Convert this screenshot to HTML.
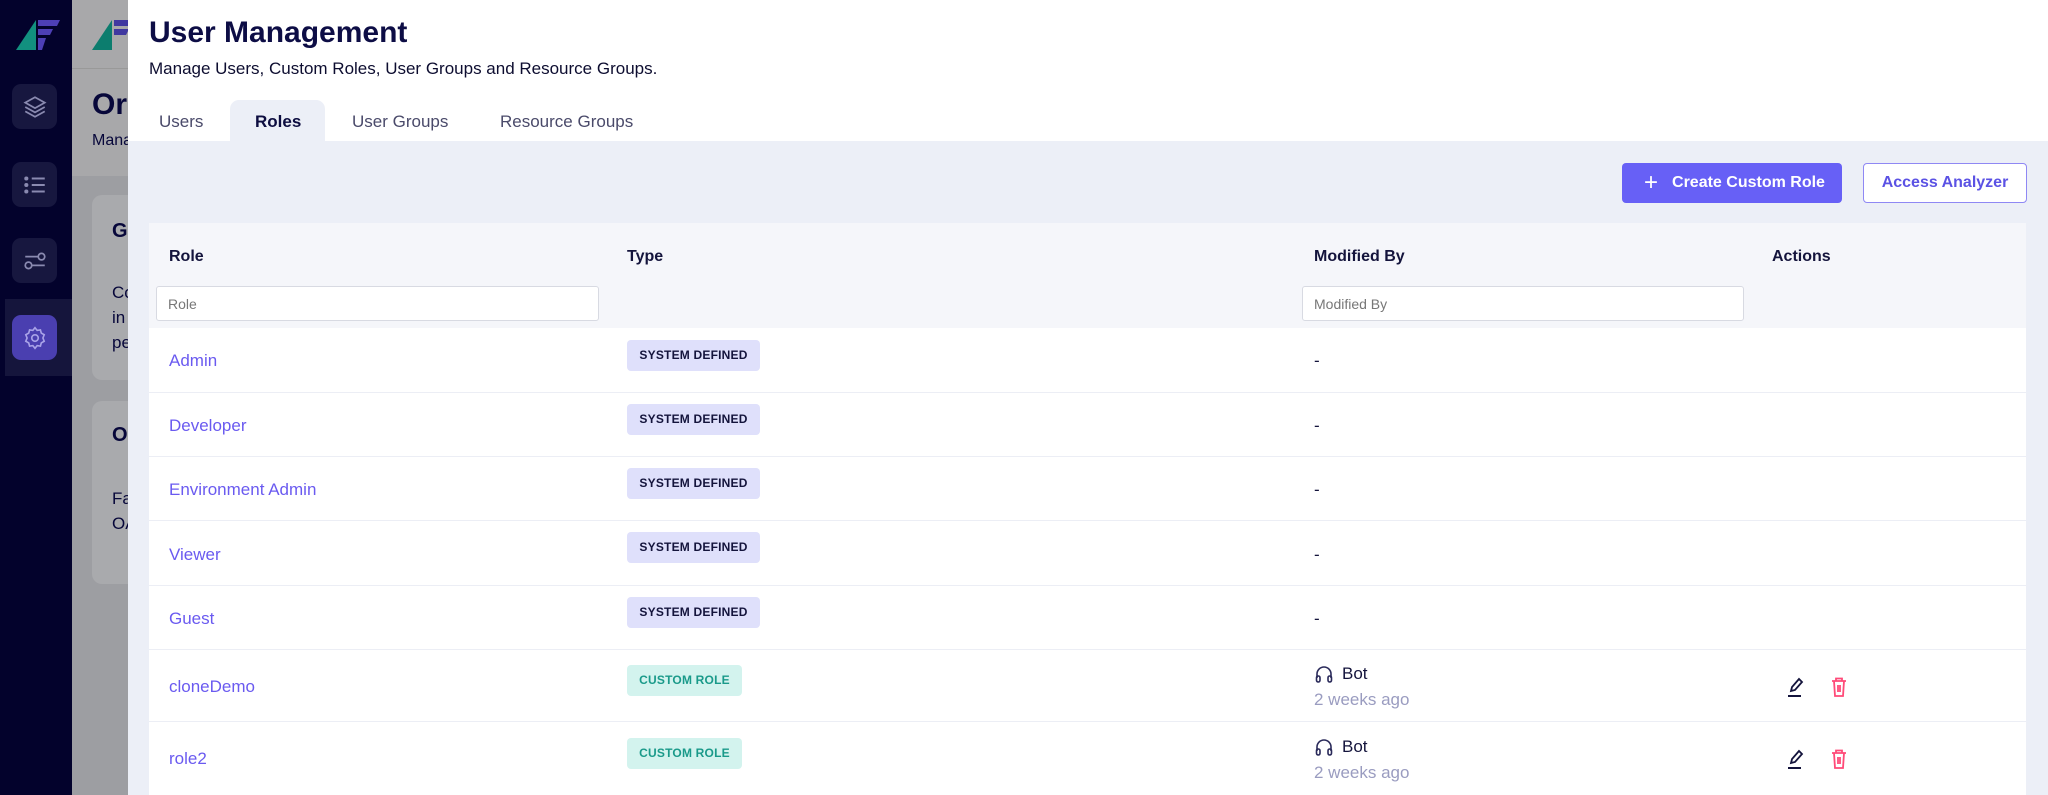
<!DOCTYPE html>
<html><head><meta charset="utf-8">
<style>
*{margin:0;padding:0;box-sizing:border-box}
body{width:2048px;height:795px;overflow:hidden;font-family:"Liberation Sans",sans-serif;background:#fff;position:relative;color:#14143c}
.a{position:absolute}
.sb{left:0;top:0;width:72px;height:795px;background:#03022c}
.ic{left:12px;width:45px;height:45px;border-radius:9px;background:#17173f}
.ov{left:72px;top:0;width:56px;height:795px;background:#9d9ea2;overflow:hidden}
.panel{left:128px;top:0;width:1920px;height:795px;background:#fff}
.gray{left:128px;top:141px;width:1920px;height:654px;background:#eceff7}
.tab{top:100px;height:41px;font-size:17px;color:#4a4a6a;line-height:44px}
.tbl{left:149px;top:223px;width:1877px;height:572px;background:#fff}
.hd{left:149px;top:223px;width:1877px;height:105px;background:#f5f6fa}
.hl{font-size:16px;font-weight:bold;color:#14143c;top:248px}
.inp{top:286px;height:35px;background:#fff;border:1px solid #d8dae2;border-radius:3px;font-size:14px;color:#777;padding:9px 11px}
.row{left:149px;width:1877px;border-bottom:1px solid #eceef5}
.lnk{left:169px;font-size:17px;color:#6a5af0}
.bs{left:627px;height:31px;border-radius:4px;font-size:12px;font-weight:bold;line-height:31px;text-align:center;white-space:nowrap;letter-spacing:.2px}
.sys{background:#dfe0fb;color:#14143c;width:133px}
.cus{background:#d3f3ee;color:#1a9a8a;width:115px}
.dash{left:1314px;font-size:17px}
</style></head><body>
<div class="a sb"></div>
<svg class="a" style="left:16px;top:20px" width="44" height="30" viewBox="0 0 44 30"><polygon points="0,30 20,0 20,30" fill="#12907f"/><polygon points="22,0 44,0 41,6 22,6" fill="#4d3fb5"/><polygon points="22,9 37,9 34,15 22,15" fill="#4d3fb5"/><polygon points="22,18 30,18 26,30 22,30" fill="#4d3fb5"/></svg>
<div class="a ic" style="top:84px"></div>
<svg class="a" style="left:22px;top:94px" width="26" height="26" viewBox="0 0 24 24" fill="none" stroke="#8a8ab0" stroke-width="1.6"><path d="M12 3l9 5-9 5-9-5z M3 12l9 5 9-5 M3 16l9 5 9-5"/></svg>
<div class="a ic" style="top:162px"></div>
<svg class="a" style="left:22px;top:172px" width="26" height="26" viewBox="0 0 24 24" fill="none" stroke="#8a8ab0" stroke-width="1.8"><path d="M9 6h12M9 12h12M9 18h12"/><circle cx="4" cy="6" r="1" fill="#8a8ab0"/><circle cx="4" cy="12" r="1" fill="#8a8ab0"/><circle cx="4" cy="18" r="1" fill="#8a8ab0"/></svg>
<div class="a ic" style="top:238px"></div>
<svg class="a" style="left:22px;top:248px" width="26" height="26" viewBox="0 0 24 24" fill="none" stroke="#8a8ab0" stroke-width="1.6"><path d="M3 8h12M9 16h12"/><circle cx="18" cy="8" r="3"/><circle cx="6" cy="16" r="3"/></svg>
<div class="a" style="left:5px;top:299px;width:67px;height:77px;background:#15153c"></div>
<div class="a ic" style="top:315px;background:#4a3fb0"></div>
<svg class="a" style="left:22px;top:325px" width="26" height="26" viewBox="0 0 24 24" fill="none" stroke="#a9a3e8" stroke-width="1.5"><circle cx="12" cy="12" r="3"/><path d="M12 2.5l2 2.5 3-.5.8 3 2.7 1.5-1.2 3 1.2 3-2.7 1.5-.8 3-3-.5-2 2.5-2-2.5-3 .5-.8-3L3.5 15l1.2-3-1.2-3 2.7-1.5.8-3 3 .5z"/></svg>
<div class="a ov">
 <div class="a" style="left:0;top:0;width:56px;height:176px;background:#a8a8aa"></div>
 <div class="a" style="left:0;top:68px;width:56px;height:1px;background:#999"></div>
 <svg class="a" style="left:20px;top:20px" width="44" height="30" viewBox="0 0 44 30"><polygon points="0,30 20,0 20,30" fill="#0c7d6e"/><polygon points="22,0 44,0 41,6 22,6" fill="#4038a0"/><polygon points="22,9 37,9 34,15 22,15" fill="#4038a0"/></svg>
 <div class="a" style="left:20px;top:88px;font-size:30px;font-weight:bold;color:#07073a">Org</div>
 <div class="a" style="left:20px;top:132px;font-size:16px;color:#07073a">Manage</div>
 <div class="a" style="left:20px;top:195px;width:60px;height:185px;background:#a9aaad;border-radius:10px"></div>
 <div class="a" style="left:40px;top:220px;font-size:20px;font-weight:bold;color:#07073a">G</div>
 <div class="a" style="left:40px;top:280px;font-size:17px;line-height:25px;color:#07073a">Co<br>in<br>pe</div>
 <div class="a" style="left:20px;top:401px;width:60px;height:183px;background:#a9aaad;border-radius:10px"></div>
 <div class="a" style="left:40px;top:424px;font-size:20px;font-weight:bold;color:#07073a">O</div>
 <div class="a" style="left:40px;top:486px;font-size:17px;line-height:25px;color:#07073a">Fa<br>OA</div>
</div>
<div class="a panel"></div>
<div class="a" style="left:149px;top:16px;font-size:30px;font-weight:600;color:#0d0d45">User Management</div>
<div class="a" style="left:149px;top:59px;font-size:17px;color:#0d0d30">Manage Users, Custom Roles, User Groups and Resource Groups.</div>
<div class="a gray"></div>
<div class="a" style="left:230px;top:100px;width:95px;height:42px;background:#eceff7;border-radius:9px 9px 0 0"></div>
<div class="a tab" style="left:159px">Users</div>
<div class="a tab" style="left:255px;font-weight:bold;color:#0d0d40">Roles</div>
<div class="a tab" style="left:352px">User Groups</div>
<div class="a tab" style="left:500px">Resource Groups</div>
<div class="a" style="left:1622px;top:163px;width:220px;height:40px;background:#6760f6;border-radius:4px;color:#fff;font-size:16px;font-weight:bold;line-height:40px;padding-left:22px;white-space:nowrap"><span style="font-size:24px;font-weight:normal;vertical-align:-3px;margin-right:14px">+</span>Create Custom Role</div>
<div class="a" style="left:1863px;top:163px;width:164px;height:40px;background:#fff;border:1px solid #8f88f4;border-radius:4px;color:#5b52e4;font-size:16px;font-weight:bold;line-height:38px;text-align:center">Access Analyzer</div>
<div class="a tbl"></div>
<div class="a hd"></div>
<div class="a hl" style="left:169px">Role</div>
<div class="a hl" style="left:627px">Type</div>
<div class="a hl" style="left:1314px">Modified By</div>
<div class="a hl" style="left:1772px">Actions</div>
<div class="a inp" style="left:156px;width:443px">Role</div>
<div class="a inp" style="left:1302px;width:442px">Modified By</div>

<div class="a row" style="top:328px;height:65px"></div>
<div class="a row" style="top:393px;height:64px"></div>
<div class="a row" style="top:457px;height:64px"></div>
<div class="a row" style="top:521px;height:65px"></div>
<div class="a row" style="top:586px;height:64px"></div>
<div class="a row" style="top:650px;height:72px"></div>

<div class="a lnk" style="top:351px">Admin</div>
<div class="a lnk" style="top:416px">Developer</div>
<div class="a lnk" style="top:480px">Environment Admin</div>
<div class="a lnk" style="top:545px">Viewer</div>
<div class="a lnk" style="top:609px">Guest</div>
<div class="a lnk" style="top:677px">cloneDemo</div>
<div class="a lnk" style="top:749px">role2</div>

<div class="a bs sys" style="top:340px">SYSTEM DEFINED</div>
<div class="a bs sys" style="top:404px">SYSTEM DEFINED</div>
<div class="a bs sys" style="top:468px">SYSTEM DEFINED</div>
<div class="a bs sys" style="top:532px">SYSTEM DEFINED</div>
<div class="a bs sys" style="top:597px">SYSTEM DEFINED</div>
<div class="a bs cus" style="top:665px">CUSTOM ROLE</div>
<div class="a bs cus" style="top:738px">CUSTOM ROLE</div>

<div class="a dash" style="top:351px">-</div>
<div class="a dash" style="top:416px">-</div>
<div class="a dash" style="top:480px">-</div>
<div class="a dash" style="top:545px">-</div>
<div class="a dash" style="top:609px">-</div>

<svg class="a" style="left:1314px;top:664px" width="20" height="20" viewBox="0 0 20 20" fill="none" stroke="#2a2a5a" stroke-width="1.6"><path d="M3 14V10a7 7 0 0114 0v4"/><rect x="2.5" y="12" width="3.5" height="6" rx="1.7"/><rect x="14" y="12" width="3.5" height="6" rx="1.7"/></svg>
<div class="a" style="left:1342px;top:664px;font-size:17px">Bot</div>
<div class="a" style="left:1314px;top:690px;font-size:17px;color:#9a9cc0">2 weeks ago</div>
<svg class="a" style="left:1314px;top:737px" width="20" height="20" viewBox="0 0 20 20" fill="none" stroke="#2a2a5a" stroke-width="1.6"><path d="M3 14V10a7 7 0 0114 0v4"/><rect x="2.5" y="12" width="3.5" height="6" rx="1.7"/><rect x="14" y="12" width="3.5" height="6" rx="1.7"/></svg>
<div class="a" style="left:1342px;top:737px;font-size:17px">Bot</div>
<div class="a" style="left:1314px;top:763px;font-size:17px;color:#9a9cc0">2 weeks ago</div>

<svg class="a" style="left:1786px;top:676px" width="20" height="22" viewBox="0 0 20 22" fill="none" stroke="#14143c" stroke-width="1.8"><path d="M5 15l1-4 7-8 3 3-7 8z"/><path d="M2 20h13" stroke-width="2"/></svg>
<svg class="a" style="left:1829px;top:676px" width="20" height="22" viewBox="0 0 20 22" fill="none" stroke="#ff4a78" stroke-width="1.8"><path d="M3 5h14M7 5V2.5h6V5M5 5l1 15h8l1-15M9 9v7M11 9v7"/></svg>
<svg class="a" style="left:1786px;top:748px" width="20" height="22" viewBox="0 0 20 22" fill="none" stroke="#14143c" stroke-width="1.8"><path d="M5 15l1-4 7-8 3 3-7 8z"/><path d="M2 20h13" stroke-width="2"/></svg>
<svg class="a" style="left:1829px;top:748px" width="20" height="22" viewBox="0 0 20 22" fill="none" stroke="#ff4a78" stroke-width="1.8"><path d="M3 5h14M7 5V2.5h6V5M5 5l1 15h8l1-15M9 9v7M11 9v7"/></svg>
</body></html>
